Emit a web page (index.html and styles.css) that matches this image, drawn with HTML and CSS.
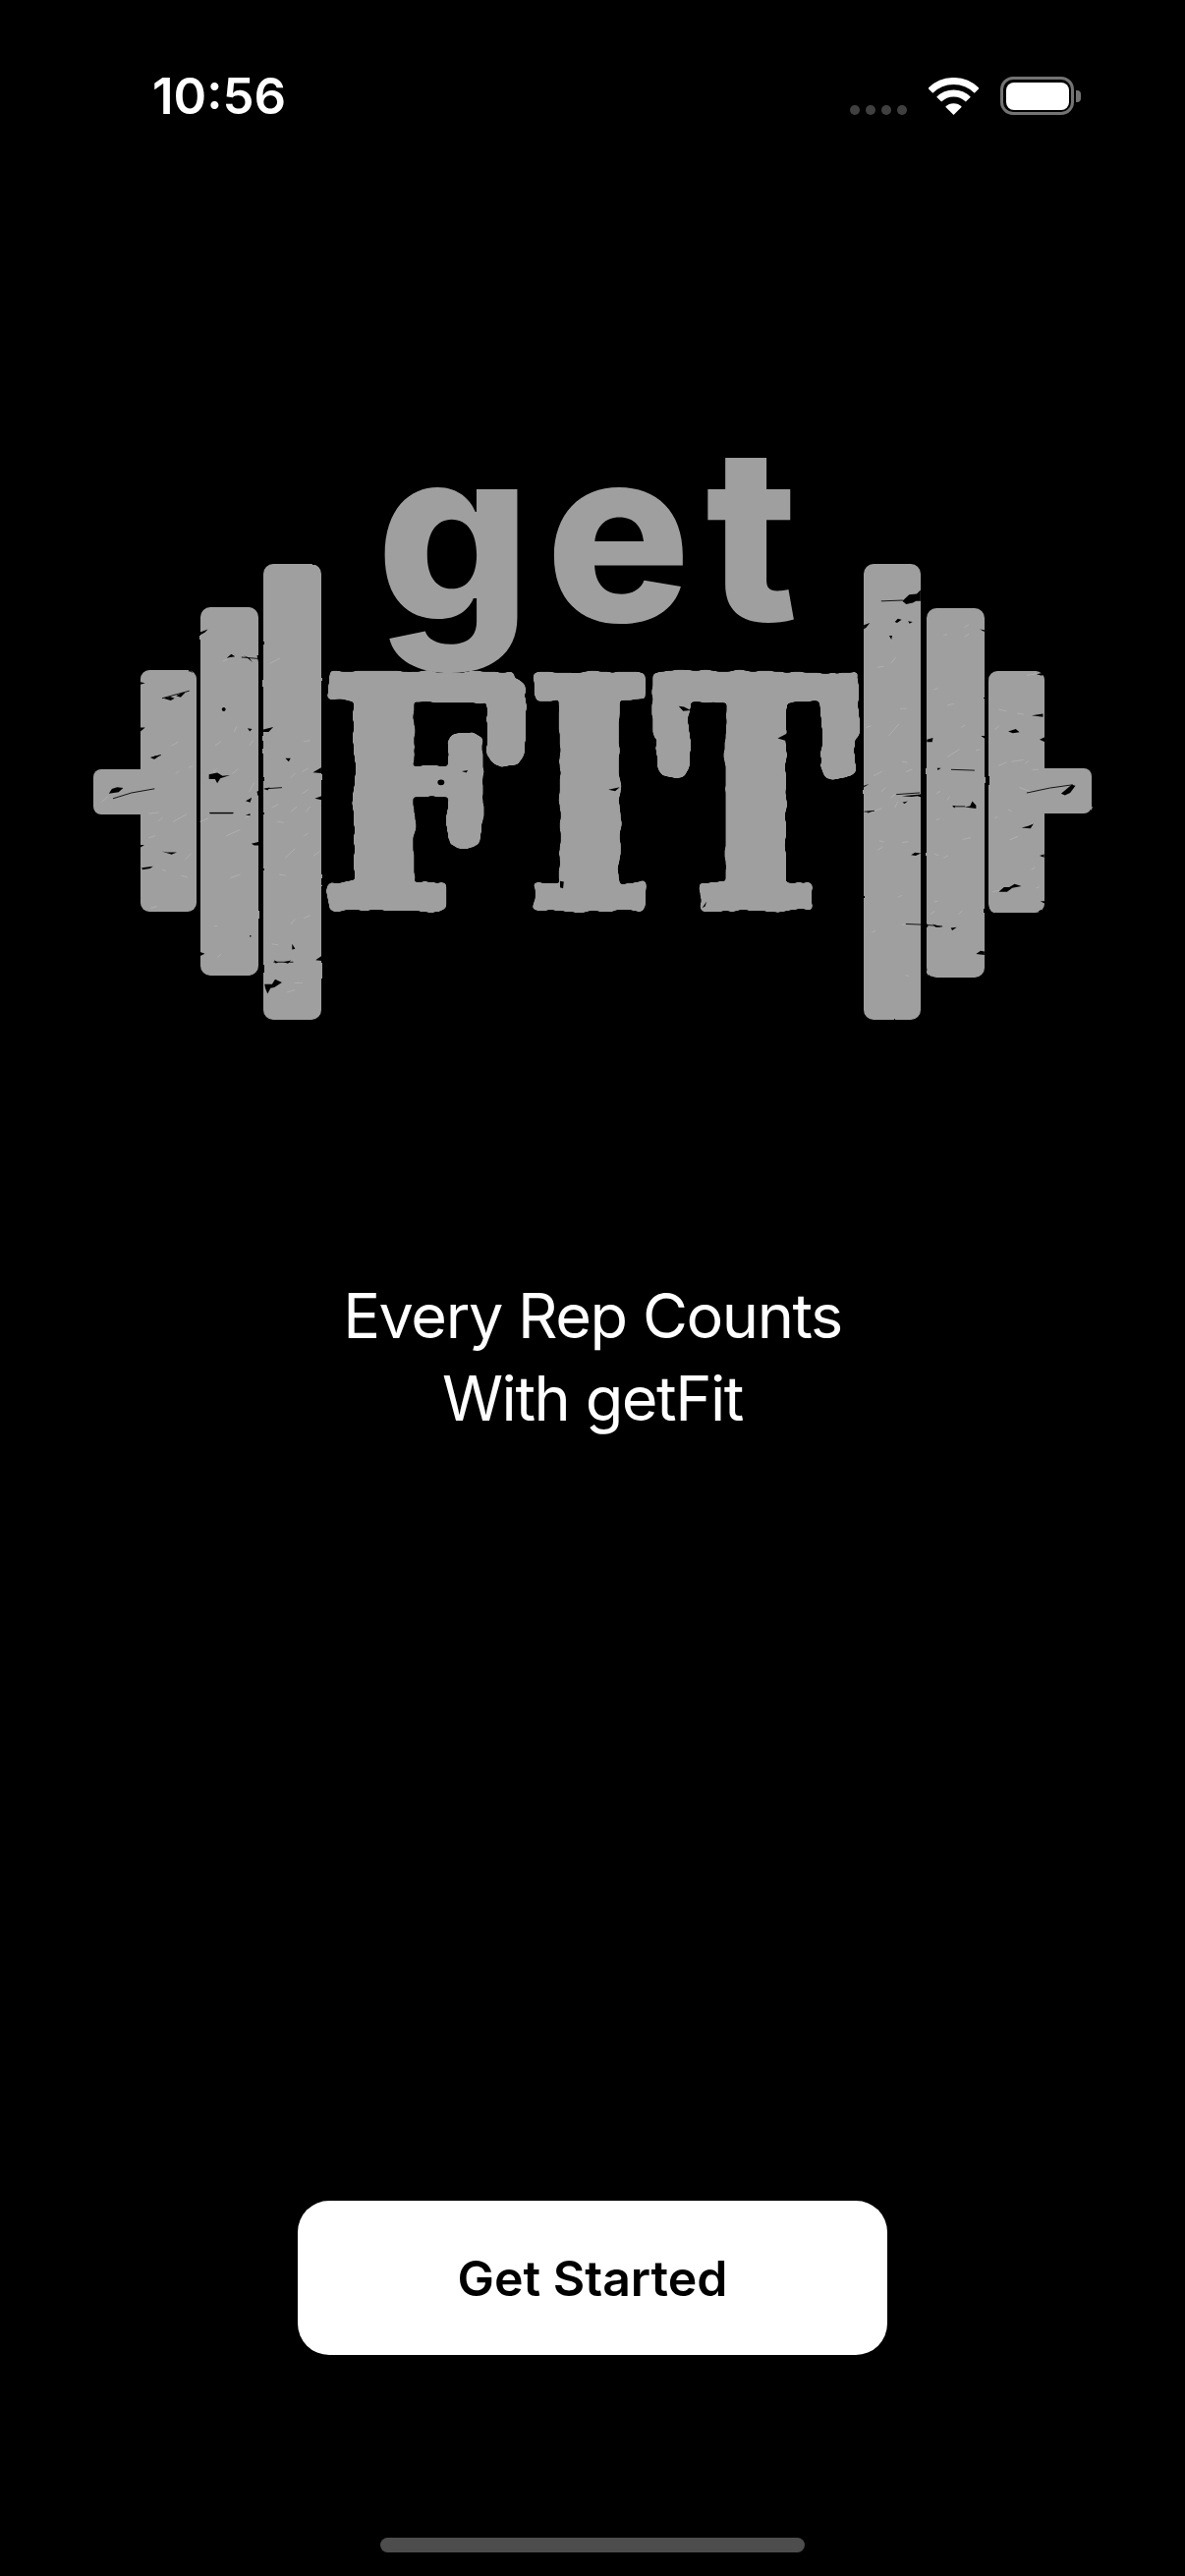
FILE: index.html
```html
<!DOCTYPE html>
<html lang="en">
<head>
<meta charset="utf-8">
<title>getFit</title>
<link rel="stylesheet" href="styles.css">
</head>
<body>
<main class="screen">
  <header class="status">
    <span class="time">10:56</span>
    <div class="status-icons">
      <div class="dots"><i class="dot"></i><i class="dot"></i><i class="dot"></i><i class="dot"></i></div>
      <svg class="wifi" viewBox="0 0 51 38" width="51" height="38">
        <path class="wifi-arc" d="M1.8 13.3A33.5 33.5 0 0 1 49.2 13.3M10.65 22.15A21 21 0 0 1 40.35 22.15"/>
        <path class="wifi-core" d="M25.5 38L17.2 29.7A11.7 11.7 0 0 1 33.8 29.7Z"/>
      </svg>
      <div class="battery"><div class="battery-body"><div class="battery-level"></div></div><div class="battery-nub"></div></div>
    </div>
  </header>

  <svg class="logo" viewBox="0 300 1206 750" width="1206" height="750" role="img" aria-label="getFIT">
    <defs>
      <filter id="rough" x="-5%" y="-5%" width="110%" height="110%">
        <feTurbulence type="fractalNoise" baseFrequency="0.04" numOctaves="2" seed="7" result="n"/>
        <feDisplacementMap in="SourceGraphic" in2="n" scale="7" xChannelSelector="R" yChannelSelector="G"/>
        <feGaussianBlur stdDeviation="1.6"/>
        <feComponentTransfer><feFuncA type="linear" slope="6" intercept="-2.5"/></feComponentTransfer>
      </filter>
      <filter id="rough-fine" x="-5%" y="-5%" width="110%" height="110%">
        <feTurbulence type="fractalNoise" baseFrequency="0.05" numOctaves="2" seed="3" result="n"/>
        <feDisplacementMap in="SourceGraphic" in2="n" scale="2" xChannelSelector="R" yChannelSelector="G"/>
      </filter>
    </defs>

    <text class="logo-get" x="383" y="632">get</text>
    <g filter="url(#rough)">
      <text class="logo-fit" transform="translate(0 922) scale(.87 1)"><tspan x="374">F</tspan><tspan x="615">I</tspan><tspan x="765">T</tspan></text>
      <g class="serifs">
        <rect x="496" y="690" width="39" height="89" rx="14"/>
        <rect x="456" y="746" width="34" height="118" rx="12"/>
        <rect x="668" y="690" width="34" height="103" rx="14"/>
        <rect x="836" y="690" width="34" height="103" rx="14"/>
      </g>
    </g>

    <g class="plates" filter="url(#rough-fine)">
      <rect x="95" y="783" width="60" height="46" rx="8"/>
      <rect x="143" y="682" width="57" height="246" rx="9"/>
      <rect x="204" y="618" width="59" height="375" rx="10"/>
      <rect x="268" y="574" width="59" height="464" rx="10"/>
      <rect x="879" y="574" width="58" height="464" rx="10"/>
      <rect x="943" y="619" width="59" height="376" rx="10"/>
      <rect x="1006" y="683" width="57" height="246" rx="9"/>
      <rect x="1050" y="782" width="61" height="46" rx="8"/>
    </g>

    <g transform="translate(0 420) scale(.3846 .4082)">
      <path class="scuff" d="M590 620l25-12M715 625l25-12M455 830l15-8M458 1020l35-18M395 1060l15-5M480 1155l15 3M400 1235l15-3M270 970l15-12M395 1000l25-3M420 1018l10-8M490 1115l15-15M570 830l15-10M620 795l6-12M565 895l8-6M615 900l15-12M660 945l12-22M600 1055l35-15M650 1010l15-8M530 1020l20-8M610 1160l25-8M660 830l10-12M805 820l15-2M800 895l15-8M770 910l10-10M800 950l15-10M770 995l15-12M810 995l10-12M720 985l15-8M735 1020l15 2M755 1110l25-22M740 1152l15 2M805 1055l10-6M770 1275l10-12M805 1260l15-6M720 1325l15 2M760 1445l20-5M800 1422l-20 0M830 1105l15-10M575 1280l-8 0M575 1358l10-8M430 1140l8 2M465 900l8-6M500 885l8-3"/>
      <path class="crack" d="M300 962l48-14 60-10M555 998h62M700 938l45-3M725 1370l50 0M400 860l25-6M640 610l50 4M430 712l70-18"/>
      <path class="chip" d="M288 950l8-12 14-4 16 2-12 10zM432 712l18-4 12 4-10 6zM466 706l16-8 8 0-12 12zM375 1135l30-4-8 6-20 3zM428 1094l14 2 26 0-14 6zM400 862l10-6 15-2-16 10zM528 548l22-8-8 8-12 6zM600 612l12-10 10 6-12 2zM645 606l15 6 8 10-10-8zM680 605l8 0-3 22zM553 902l22-4 14 8 20-2-26 8-8 12-6-10-16 0zM556 997h60v3h-60zM650 968l16-8-4 12zM697 790l26-6-12 12-14 0zM755 862h14l-5 8zM680 945l16-8v18l-14 0zM700 938l14-4-6 8zM665 1075l26-6v10l-18 0zM833 962l18-6v10zM828 897l22-12v14zM592 735a5 5 0 1 0 .1 0zM655 787l12 2-6 6zM700 1425l20 0 8-12 18 8-20 12-10 2-8 14-6-14zM725 1365l12 6-8 2zM750 1370l20-4-8 8zM773 1325l8 12-8 2zM835 1365l16-10v12zM530 1345l12 4-12 6zM372 672l12 2-12 4zM372 785l12 0-12 10zM372 1078l10 0-10 6zM660 1304l5 0-2 5zM650 1003l12-3 0 5z"/>
      <path class="chip" d="M1158 922a9 7 0 1 0 18 0 9 7 0 1 0-18 0zM1222 894l16-2-4 6zM1482 1168l10 2-2 16-8-2z"/>
    </g>

    <g transform="translate(603 420) scale(.3846 .4082)">
      <path class="scuff" d="M785 805l25-28M755 635l15-2M790 625l12-14M815 738l15 0M835 1070l-15 2M760 1068l10 2M755 1090l12-6M745 905l20-10M765 945l10-10M790 960l10-8M740 995l25-8M800 985l8-15M830 895l15-5M820 870l12 2M725 785l12-4M810 1208l8-4M740 1295l8-2M830 1403l6 2M835 1275l-15 2M970 840l-30 18M1000 1060l-20 4M910 1015l8-2M905 1100l10 4M940 1105l-10 5M930 555l8-2M985 535l10-6M985 560l10-8M905 690l8-2M940 730l15-4M985 780l-8 4M1025 840l-10 2M905 1220l8-2M895 1250l10-6M970 1250l8-8M910 950l10-6M940 965l5-8M1075 880l20-8M1110 870l30-4M1145 875l8-6M1075 740l20 4M1125 750l15 2M1065 790l10-8M1105 1065l20-8M1170 1135l-8 4M1175 1185l6-2M1100 990l8 4M1065 1010l6-2M1180 890l-15 0M1150 655l25-4M1060 1195l15-4M1130 935l30 10"/>
      <path class="crack" d="M765 470l55-2M805 952l60-4M950 890l60 2M1150 948l60-12 60-8M830 1275l50 2 45 4M720 995l25-2M955 982l30 0"/>
      <path class="chip" d="M820 470l18-16 20-2 10-10v28l-12 0-8 4-18 4zM800 522l8-8 10 2-12 8zM835 520l12 2-8 4zM785 556l8 0-2 10zM718 530l16-6-10 12-6 4zM818 956l50-4 4-10v18l-12-4-16 2zM820 972l14-3-8 6zM843 1103l10-6 16 2-14 6zM718 930l14-4-14 8zM725 996l20-4-16 6zM880 1265l8 16-8 6zM885 815l16-4-2 10-14 0zM912 886l10 0-8 6zM1028 806l12 0v8zM985 983l14-2 6-12 10 10v8l-20-2zM952 980l8 0-2 6zM1015 1350l12-8 10 2v8zM900 1275l24 8-16 0zM948 1285l16-2-12 8zM1025 540l12 2v4zM1100 795l20-6 10 8-18 2zM1162 755l30-4v8zM1183 815l14-6v12zM1135 1035l18-4 14-6-8 12zM1075 1195l14-12 14 0 14-8 18 6-24 4-14 10zM1175 652l20-4-6 8zM1183 1105l12-4v8zM1240 950l28-22 10 2-14 18-14 6zM228 732l14 2 18 8-20 2zM490 812l25-12 5 24-8-6zM290 1235l12-16-4 12zM42 940l30-6-12 10zM1185 1218l12 0v6z"/>
    </g>
  </svg>

  <p class="tagline">Every Rep Counts<br>With getFit</p>

  <a class="cta">Get Started</a>
  <div class="home-indicator"></div>
</main>
</body>
</html>
```
FILE: styles.css
```css
html, body {
  margin: 0;
  padding: 0;
  background: #000;
}

.screen {
  width: 1206px;
  height: 2622px;
  display: flex;
  flex-direction: column;
  align-items: center;
  box-sizing: border-box;
  padding-bottom: 24px;
  background: #000;
  color: #fff;
  font-family: Inter, "Liberation Sans", sans-serif;
  overflow: hidden;
}

.status {
  width: 100%;
  height: 160px;
  box-sizing: border-box;
  padding: 78px 106px 0 155px;
  display: flex;
  justify-content: space-between;
  align-items: flex-start;
}

.time {
  font-size: 51px;
  font-weight: 600;
  line-height: 40px;
}

.status-icons {
  display: flex;
  align-items: flex-end;
  gap: 22px;
  height: 39px;
}

.dots {
  display: flex;
  gap: 6px;
}

.dot {
  width: 10px;
  height: 10px;
  border-radius: 50%;
  background: #404040;
}

.wifi {
  display: block;
}

.wifi-arc {
  fill: none;
  stroke: #fff;
  stroke-width: 7;
}

.wifi-core {
  fill: #fff;
}

.battery {
  display: flex;
  align-items: center;
  gap: 2px;
}

.battery-body {
  width: 75px;
  height: 39px;
  box-sizing: border-box;
  border: 3.5px solid #737373;
  border-radius: 13px;
  padding: 2.5px;
}

.battery-level {
  height: 100%;
  background: #fff;
  border-radius: 8px;
}

.battery-nub {
  width: 5px;
  height: 12px;
  background: #737373;
  border-radius: 0 4px 4px 0;
}

.logo {
  display: block;
  flex: none;
  margin-top: 140px;
}

.logo-get {
  font-family: Inter, sans-serif;
  font-size: 246px;
  font-weight: 800;
  letter-spacing: 15px;
  fill: #9f9f9f;
}

.logo-fit {
  font-family: "DejaVu Serif", serif;
  font-size: 320px;
  font-weight: 700;
  fill: #9f9f9f;
  stroke: #9f9f9f;
  stroke-width: 10px;
  stroke-linejoin: round;
}

.serifs rect,
.plates rect {
  fill: #9f9f9f;
}

.scuff {
  fill: none;
  stroke: #b8b8b8;
  stroke-width: 1.6;
  stroke-linecap: round;
}

.crack {
  fill: none;
  stroke: #000;
  stroke-width: 2.2;
  stroke-linecap: round;
}

.chip {
  fill: #000;
}

.tagline {
  margin: 247px 0 0;
  font-size: 63px;
  font-weight: 400;
  letter-spacing: -1.45px;
  line-height: 84px;
  text-align: center;
}

.cta {
  margin-top: auto;
  width: 600px;
  height: 157px;
  display: flex;
  align-items: center;
  justify-content: center;
  background: #fff;
  color: #000;
  border-radius: 32px;
  font-size: 50px;
  font-weight: 600;
}

.home-indicator {
  width: 432px;
  height: 15px;
  margin-top: 186px;
  border-radius: 8px;
  background: #4d4d4d;
}
```
